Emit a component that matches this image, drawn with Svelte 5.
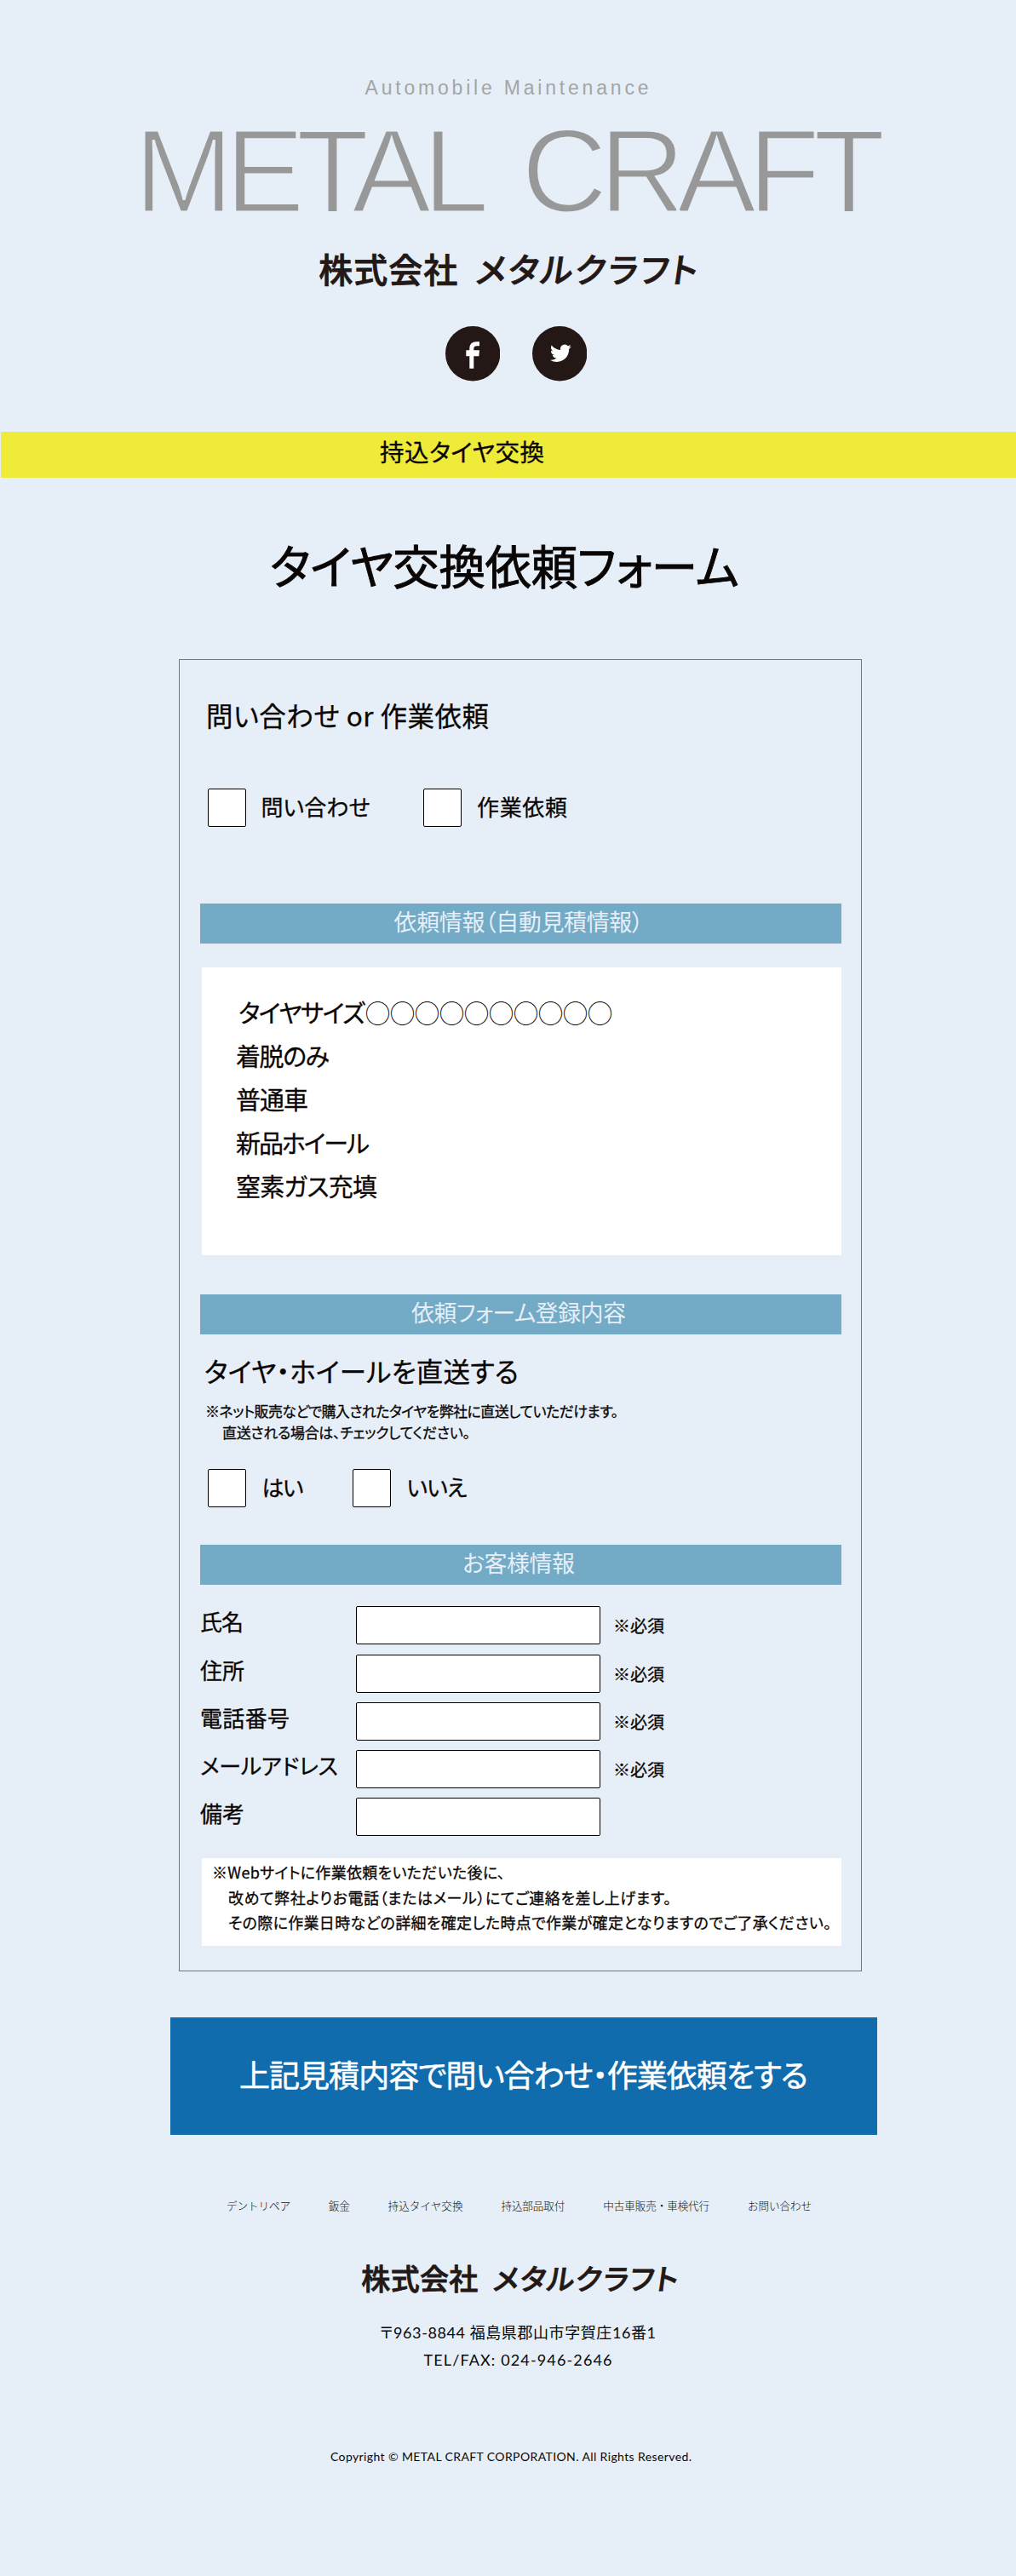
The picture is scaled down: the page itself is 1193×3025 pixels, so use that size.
<script>
    const orderInfo = [
        { text: "着脱のみ", width: 110 },
        { text: "普通車", width: 85 },
        { text: "新品ホイール", width: 157 },
        { text: "窒素ガス充填", width: 166 }
    ]

    const fields = [
        { label: "氏名", width: 51, required: true },
        { label: "住所", width: 52, required: true },
        { label: "電話番号", width: 105, required: true },
        { label: "メールアドレス", width: 162, required: true },
        { label: "備考", width: 52, required: false }
    ]

    const links = [
        { text: "デントリペア", width: 75 },
        { text: "鈑金", width: 25 },
        { text: "持込タイヤ交換", width: 88 },
        { text: "持込部品取付", width: 75 },
        { text: "中古車販売・車検代行", width: 125 },
        { text: "お問い合わせ", width: 75 }
    ]

    // spaces the letters so that the line gets the given width
    function fit(node, width) {
        const now = node.getBoundingClientRect().width
        const space = (width - now) / ([...node.textContent].length - 1)
        node.style.letterSpacing = space + "px"
        node.style.marginRight = -space + "px"
    }
</script>

{#snippet company(first, second)}
    <span class="kanji" use:fit={first}>株式会社</span>
    <span class="kana" use:fit={second}>メタルクラフト</span>
{/snippet}

<div class="page">
    <header>
        <p class="tagline"><span use:fit={333}>Automobile Maintenance</span></p>
        <h1><span use:fit={882}>METAL CRAFT</span></h1>
        <p class="company">{@render company(163, 265)}</p>
        <div class="social">
            <svg viewBox="0 0 64.4 64.4">
                <circle cx="32.2" cy="32.2" r="32.2" fill="#231815" />
                <path fill="#fff" d="M28.3 49.7V35.3H24.3V28.3H28.3V26.5C28.3 21 31.5 18.3 36.5 18.3H40V23.3H37C34.5 23.3 33.3 24.5 33.3 26.5V28.3H40L39.4 35.3H33.3V49.7Z" />
            </svg>
            <svg viewBox="0 0 64.4 64.4">
                <circle cx="32.2" cy="32.2" r="32.2" fill="#231815" />
                <path fill="#fff" transform="translate(21 19.2) scale(1.03 1.05)" d="M23.953 4.57a10 10 0 01-2.825.775 4.958 4.958 0 002.163-2.723c-.951.555-2.005.959-3.127 1.184a4.92 4.92 0 00-8.384 4.482C7.69 8.095 4.067 6.13 1.64 3.162a4.822 4.822 0 00-.666 2.475c0 1.71.87 3.213 2.188 4.096a4.904 4.904 0 01-2.228-.616v.06a4.923 4.923 0 003.946 4.827 4.996 4.996 0 01-2.212.085 4.936 4.936 0 004.604 3.417 9.867 9.867 0 01-6.102 2.105c-.39 0-.779-.023-1.17-.067a13.995 13.995 0 007.557 2.209c9.053 0 13.998-7.496 13.998-13.985 0-.21 0-.42-.015-.63A9.935 9.935 0 0024 4.59z" />
            </svg>
        </div>
    </header>

    <div class="banner"><span use:fit={193}>持込タイヤ交換</span></div>

    <h2><span use:fit={551}>タイヤ交換依頼フォーム</span></h2>

    <form>
        <h3 class="kind"><span use:fit={332}>問い合わせ or 作業依頼</span></h3>
        <div class="checks">
            <label class="ask"><i></i><span use:fit={128}>問い合わせ</span></label>
            <label><i></i><span use:fit={106}>作業依頼</span></label>
        </div>

        <h4><span use:fit={293}>依頼情報（自動見積情報）</span></h4>
        <div class="info">
            <p class="size"><span use:fit={149}>タイヤサイズ</span><span class="circles" use:fit={290}>◯◯◯◯◯◯◯◯◯◯</span></p>
            {#each orderInfo as line}
                <p><span use:fit={line.width}>{line.text}</span></p>
            {/each}
        </div>

        <h4 class="second"><span use:fit={252}>依頼フォーム登録内容</span></h4>
        <h3 class="direct"><span use:fit={369}>タイヤ・ホイールを直送する</span></h3>
        <div class="note">
            <p><span use:fit={485}>※ネット販売などで購入されたタイヤを弊社に直送していただけます。</span></p>
            <p class="indent"><span use:fit={291}>直送される場合は、チェックしてください。</span></p>
        </div>
        <div class="checks yesno">
            <label class="yes"><i></i><span use:fit={49}>はい</span></label>
            <label><i></i><span use:fit={71}>いいえ</span></label>
        </div>

        <h4 class="third"><span use:fit={132}>お客様情報</span></h4>
        <div class="fields">
            {#each fields as field}
                <div class="field">
                    <span class="name"><span use:fit={field.width}>{field.label}</span></span>
                    <input type="text" />
                    {#if field.required}
                        <span class="required"><span use:fit={60}>※必須</span></span>
                    {/if}
                </div>
            {/each}
        </div>

        <div class="notice">
            <p><span use:fit={344}>※Webサイトに作業依頼をいただいた後に、</span></p>
            <p class="indent"><span use:fit={520}>改めて弊社よりお電話（またはメール）にてご連絡を差し上げます。</span></p>
            <p class="indent"><span use:fit={708}>その際に作業日時などの詳細を確定した時点で作業が確定となりますのでご了承ください。</span></p>
        </div>
    </form>

    <button><span use:fit={668}>上記見積内容で問い合わせ・作業依頼をする</span></button>

    <footer>
        <nav>
            {#each links as link}
                <span class="link"><span use:fit={link.width}>{link.text}</span></span>
            {/each}
        </nav>
        <p class="company small">{@render company(137, 222)}</p>
        <p class="address"><span use:fit={324}>〒963-8844 福島県郡山市字賀庄16番1</span></p>
        <p class="tel"><span use:fit={221}>TEL/FAX: 024-946-2646</span></p>
        <p class="copy"><span use:fit={424}>Copyright © METAL CRAFT CORPORATION. All Rights Reserved.</span></p>
    </footer>
</div>

<style>
:global(body){
    margin: 0;
    background-color: #e6eff7;
}

.page{
    width: 1193px;
    height: 3025px;
    overflow: hidden;
    background-color: #e6eff7;
    color: #0a0605;
    font-family: "Noto Sans CJK JP", sans-serif;
    font-feature-settings: "palt";
    box-sizing: border-box;
}

.page span span, p > span, h1 > span, h2 > span, h3 > span, h4 > span, label > span, button > span, .banner > span{
    display: inline-block;
    white-space: nowrap;
}

h1, h2, h3, h4, p{
    margin: 0;
    font-weight: 400;
}

/* a little heavier than regular */
.banner, h3, .checks, .info p, .note, .fields, .notice{
    -webkit-text-stroke: 0.3px #0a0605;
}

header{
    padding-top: 88px;
    display: flex;
    flex-direction: column;
    align-items: center;
}

.tagline{
    margin-left: -3px;
    font: 23px/30px "Liberation Sans", sans-serif;
    color: #a3a5a7;
}

/* the stroke in the page colour thins the letters */
h1{
    margin: 33px 0 0 4px;
    font: 400 140px/100px "Liberation Sans", sans-serif;
    color: #989898;
    word-spacing: 24px;
    -webkit-text-stroke: 3px #e6eff7;
}

.company{
    display: flex;
    gap: 23px;
    margin: 44px 0 0 1px;
    font-size: 40px;
    line-height: 40px;
    font-weight: 500;
    color: #231815;
    -webkit-text-stroke: 0.8px #231815;
}

.kana{
    transform: skewX(-8deg);
}

.social{
    display: flex;
    gap: 38px;
    margin: 48.4px 0 0 19px;
}

.social svg{
    width: 64.4px;
    height: 64.4px;
}

.banner{
    height: 54px;
    margin: 59.6px 0 0 1px;
    padding-left: 445px;
    box-sizing: border-box;
    background-color: #eeeb39;
    font-size: 28.5px;
    line-height: 46px;
}

h2{
    margin: 72px 0 81px 317px;
    font-size: 54.5px;
    line-height: 60px;
    -webkit-text-stroke: 0.9px #0a0605;
}

form{
    width: 802px;
    height: 1541px;
    margin-left: 210px;
    padding: 44px 23px 0 24px;
    box-sizing: border-box;
    border: 1px solid #70767e;
}

h3{
    font-size: 31.5px;
    line-height: 40px;
}

.kind{
    padding-left: 7px;
}

.checks{
    display: flex;
    margin: 67px 0 90px 8.5px;
    font-size: 26px;
}

.checks label{
    display: flex;
    align-items: center;
    height: 45px;
}

.checks label > span{
    padding-bottom: 5px;
}

.checks i{
    width: 45px;
    height: 45px;
    margin-right: 18px;
    box-sizing: border-box;
    border: 1px solid #000;
    border-radius: 2px;
    background-color: #fff;
}

.ask{
    width: 253.5px;
}

.yesno{
    margin: 31px 0 44px 8.5px;
}

.yesno i{
    margin-right: 19px;
}

.yes{
    width: 170px;
}

h4{
    height: 47px;
    padding-right: 5px;
    box-sizing: border-box;
    background-color: #73aac6;
    color: #e6eff7;
    font-size: 27px;
    font-weight: 400;
    line-height: 42px;
    text-align: center;
}

.info{
    width: 751px;
    height: 338px;
    margin: 28px 0 46px 2px;
    padding: 27px 0 0 40px;
    box-sizing: border-box;
    background-color: #fff;
    font-size: 29px;
    line-height: 51px;
}

.size{
    display: flex;
    padding-left: 3px;
}

.circles{
    -webkit-text-stroke: 0;
}

.direct{
    margin: 22px 0 15px 5px;
}

.note{
    padding-left: 6px;
    font-size: 17px;
    line-height: 25px;
}

.note .indent{
    padding-left: 20px;
}

.fields{
    display: grid;
    gap: 11.25px;
    margin: 25px 0 26px;
}

.field{
    display: flex;
    height: 45px;
}

.name{
    width: 183px;
    font-size: 26px;
    line-height: 36px;
}

input{
    width: 287px;
    height: 45px;
    padding: 0 8px;
    box-sizing: border-box;
    border: 1px solid #000;
    border-radius: 2px;
    background-color: #fff;
}

.required{
    margin-left: 15px;
    font-size: 20px;
    line-height: 45px;
}

.notice{
    width: 751px;
    height: 103px;
    margin-left: 2px;
    padding: 2px 0 0 12px;
    box-sizing: border-box;
    background-color: #fff;
    font-size: 18px;
    line-height: 29.3px;
}

.notice .indent{
    padding-left: 19px;
}

button{
    display: block;
    width: 830px;
    height: 138px;
    margin: 54px 0 0 200px;
    padding: 0 0 6px;
    border: 0;
    background-color: #116cae;
    color: #fff;
    font: 400 36px "Noto Sans CJK JP", sans-serif;
    font-feature-settings: "palt";
    -webkit-text-stroke: 0.5px #fff;
}

footer{
    display: flex;
    flex-direction: column;
    align-items: center;
}

nav{
    display: flex;
    gap: 44.8px;
    margin: 73px 0 0 26px;
    font-size: 12.6px;
    line-height: 20px;
    font-weight: 300;
    color: #111;
    font-feature-settings: normal;
}

.small{
    gap: 19px;
    margin: 55px 0 28px 28px;
    font-size: 34px;
}

.address, .tel{
    margin-left: 23px;
    font-family: Lato, "Noto Sans CJK JP", sans-serif;
    font-size: 18px;
    line-height: 32px;
}

.copy{
    margin: 88px 0 0 7px;
    font: 14px/20px Lato, sans-serif;
}
</style>
